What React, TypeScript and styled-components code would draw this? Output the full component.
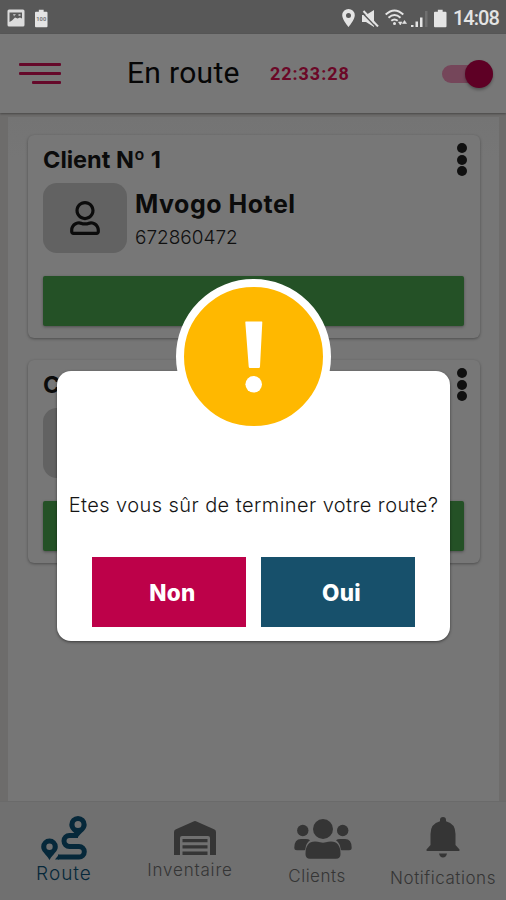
import React from 'react';
import styled, { createGlobalStyle } from 'styled-components';
import { FaRegUser } from 'react-icons/fa';

const GlobalStyle = createGlobalStyle`
  *, *::before, *::after { box-sizing: border-box; }
  body { margin: 0; font-family: Inter, 'Open Sans', sans-serif; }
  button { border: 0; padding: 0; font: inherit; background: none; }
`;

const Screen = styled.div`
  position: relative;
  width: 506px;
  height: 900px;
  overflow: hidden;
  display: flex;
  flex-direction: column;
  background: #6d6c6b;
`;

const StatusBar = styled.div`
  flex: none;
  height: 34px;
  padding: 2px 7px 0;
  display: flex;
  align-items: center;
  justify-content: space-between;
  background: #585858;
  color: #e4e4e4;
`;

const StatusGroup = styled.div<{ $gap: number }>`
  display: flex;
  align-items: center;
  gap: ${(p) => p.$gap}px;
`;

const Clock = styled.span`
  width: 46px;
  white-space: nowrap;
  font: 500 20px/20px Roboto, sans-serif;
  letter-spacing: -1px;
`;

const Header = styled.header`
  flex: none;
  height: 79px;
  padding: 0 13px 0 19px;
  display: flex;
  align-items: center;
  background: #777;
  box-shadow: 0 1px 2px rgba(0, 0, 0, 0.35);
  z-index: 1;
`;

const MenuLines = styled.div`
  width: 42px;
  margin-top: -1px;
  display: flex;
  flex-direction: column;
  align-items: flex-end;
  gap: 6px;
`;

const MenuLine = styled.span<{ $width: number }>`
  width: ${(p) => p.$width}px;
  height: 3px;
  border-radius: 1px;
  background: #65092a;
`;

const Title = styled.h1`
  margin: -2px 0 0 66px;
  width: 143px;
  white-space: nowrap;
  font: 400 30px/36px Roboto, sans-serif;
  letter-spacing: 0.3px;
  color: #060606;
`;

const Timer = styled.span`
  font: 700 18px/22px Roboto, sans-serif;
  letter-spacing: 0.95px;
  color: #6b0827;
`;

const Toggle = styled.div`
  margin-left: auto;
  width: 51px;
  height: 18px;
  display: flex;
  align-items: center;
  justify-content: flex-end;
  background: #75465a;
  border-radius: 9px;
`;

const Knob = styled.span`
  width: 28px;
  height: 28px;
  flex: none;
  border-radius: 50%;
  background: #5e0025;
  box-shadow: 0 2px 3px rgba(0, 0, 0, 0.3);
`;

const Content = styled.main`
  flex: none;
  width: 491px;
  height: 684px;
  margin: 4px 0 0 8px;
  padding: 18px 19px 0 20px;
  display: flex;
  flex-direction: column;
  gap: 22px;
  background: linear-gradient(#747474, #767676 40px);
`;

const Card = styled.section`
  height: 203px;
  padding: 12px 15px 0;
  display: flex;
  flex-direction: column;
  border-radius: 6px;
  background: #777;
  box-shadow: 0 1px 3px rgba(0, 0, 0, 0.35);
`;

const CardHead = styled.div`
  height: 36px;
  display: flex;
  justify-content: space-between;
`;

const CardTitle = styled.h2`
  margin: 0;
  font-size: 23.5px;
  line-height: 26px;
  font-weight: 700;
  letter-spacing: 0;
  color: #0b0b0b;
`;

const Kebab = styled.div`
  margin: -4px -2px 0 0;
  display: flex;
  flex-direction: column;
  gap: 1.5px;
`;

const Dot = styled.span`
  width: 10px;
  height: 10px;
  border-radius: 50%;
  background: #101010;
`;

const Person = styled.div`
  display: flex;
  gap: 8px;
`;

const Avatar = styled.div`
  width: 84px;
  height: 70px;
  display: flex;
  align-items: center;
  justify-content: center;
  border-radius: 14px;
  background: #626262;
  color: #0b0b0b;
`;

const PersonName = styled.div`
  margin-top: 6px;
  font-size: 25px;
  line-height: 30px;
  font-weight: 700;
  letter-spacing: 0.5px;
  color: #0b0b0b;
`;

const Phone = styled.div`
  margin-top: 7px;
  font-size: 19px;
  line-height: 24px;
  font-weight: 300;
  letter-spacing: 0;
  color: #101010;
`;

const GreenBar = styled.div`
  margin-top: 23px;
  margin-right: 1px;
  height: 50px;
  border-radius: 2px;
  background: #245126;
  box-shadow: 0 1px 3px rgba(0, 0, 0, 0.35);
`;

const Nav = styled.nav`
  height: 99px;
  display: flex;
  flex: none;
  background: #707070;
  border-top: 1px solid #6a6a6a;
`;

const NavItem = styled.div<{ $active?: boolean; $top: number; $width: number; $iconIndent?: number }>`
  width: ${(p) => p.$width}px;
  padding-top: ${(p) => p.$top}px;
  display: flex;
  flex: none;
  flex-direction: column;
  align-items: center;
  color: ${(p) => (p.$active ? '#06283a' : '#353535')};

  svg {
    flex: none;
    margin-left: ${(p) => p.$iconIndent ?? 0}px;
  }
`;

const NavLabel = styled.span<{ $size: number; $spacing: number; $gap: number }>`
  margin-top: ${(p) => p.$gap}px;
  font-size: ${(p) => p.$size}px;
  line-height: 22px;
  font-weight: 300;
  letter-spacing: ${(p) => p.$spacing}px;
`;

const Dialog = styled.div`
  position: absolute;
  z-index: 2;
  left: 57px;
  top: 371px;
  width: 393px;
  height: 270px;
  padding-top: 119px;
  border-radius: 14px;
  background: #fff;
  box-shadow: 0 1px 3px rgba(0, 0, 0, 0.5);
`;

const Badge = styled.div`
  position: absolute;
  left: 119px;
  top: -92px;
  width: 155px;
  height: 155px;
  border: 8px solid #fff;
  border-radius: 50%;
  background: #ffb800;
`;

const Message = styled.p`
  margin: 0;
  height: 67px;
  text-align: center;
  white-space: nowrap;
  font-size: 20px;
  line-height: 30px;
  font-weight: 300;
  letter-spacing: 0.43px;
  color: #151515;
`;

const Actions = styled.div`
  display: flex;
  gap: 15px;
  padding-left: 35px;
`;

const Action = styled.button<{ $color: string }>`
  width: 154px;
  height: 70px;
  padding: 0 0 0 7px;
  background: ${(p) => p.$color};
  color: #fff;
  font-size: 22.5px;
  font-weight: 800;
  letter-spacing: 0.3px;
`;

const PictureIcon = () => (
  <svg width="18" height="18" viewBox="0 0 18 18">
    <rect x="0.5" y="0.5" width="17" height="17" rx="1.5" fill="#dcdcdc" />
    <path d="M2.500 3.500H15V9.500l-2-1-2.500 1-2.500-1-3 3-2.500 1.500z" fill="#5a5a5a" />
    <path d="M6 5l1 2.500 2-2.500zM11.500 5h2v2h-2z" fill="#b5b5b5" />
  </svg>
);

const Battery = ({ label }: { label?: string }) => (
  <svg width="12.500" height="19" viewBox="0 0 13 19">
    <path d="M4 0.500h5v2h3q1 0 1 1v14q0 1-1 1H1q-1 0-1-1v-14q0-1 1-1h3z" fill="#e4e4e4" />
    {label && (
      <text x="6.500" y="12.500" textAnchor="middle" fontFamily="Roboto" fontSize="6" fontWeight="700" fill="#777">
        {label}
      </text>
    )}
  </svg>
);

const PinIcon = () => (
  <svg width="13" height="18" viewBox="0 0 13 18">
    <path fillRule="evenodd" d="M6.500 0a6.300 6.300 0 0 0-6.300 6.300C.2 11 6.500 18 6.500 18s6.300-7 6.300-11.700A6.300 6.300 0 0 0 6.500 0zm0 4a2.500 2.500 0 1 1 0 5 2.500 2.500 0 0 1 0-5z" fill="#e4e4e4" />
  </svg>
);

const MuteIcon = () => (
  <svg width="17" height="17" viewBox="0 0 17 17">
    <path d="M0 5h4l8-5v17l-8-5H0z" fill="#e4e4e4" />
    <path d="M0 2.500L14 17" stroke="#585858" strokeWidth="1.500" />
    <path d="M1.500 1L16 16.500" stroke="#e4e4e4" strokeWidth="2" />
  </svg>
);

const WifiIcon = () => (
  <svg width="19" height="18" viewBox="0 0 19 18" overflow="visible" fill="none" stroke="#e4e4e4" strokeWidth="1.900">
    <path d="M0.700 5.500Q9.500-2.700 18.300 5.500M3.500 8.700Q9.500 3.200 15.500 8.700M6.300 11.800Q9.500 9 12.700 11.800" />
    <circle cx="9.500" cy="14.500" r="1.500" fill="#e4e4e4" stroke="none" />
    <path d="M13.500 13h3.500l-1.700 3zM17.500 14.500l2-3 2 3z" fill="#e4e4e4" strokeWidth="0.600" />
  </svg>
);

const SignalIcon = () => (
  <svg width="17" height="17" viewBox="0 0 17 17" fill="#e4e4e4">
    <path d="M0 15h2.500v2H0zM4.500 11.500H7V17H4.500zM9 7.500h2.500V17H9z" />
    <path d="M14 1h2.500v16H14z" fill="#6f6f6f" />
  </svg>
);

const RouteIcon = () => (
  <svg width="46" height="46" viewBox="0 0 46 46">
    <path d="M37 20.500H28.500a5.500 5.500 0 0 0 0 11H38a5.300 5.300 0 0 1 0 10.600H17" fill="none" stroke="currentColor" strokeWidth="5" />
    <path d="M14 44.600l4-5v5z" fill="currentColor" />
    <path fillRule="evenodd" d="M37 1a8.700 8.700 0 0 0-8.700 8.700c0 5 5.700 8 8.700 12.300 3-4.300 8.700-7.300 8.700-12.300A8.700 8.700 0 0 0 37 1zm0 5a3.500 3.500 0 1 1 0 7 3.500 3.500 0 0 1 0-7z" fill="currentColor" />
    <path fillRule="evenodd" d="M8.500 23.500A8.300 8.300 0 0 0 .2 31.800C.2 36.500 5 39 8.500 45c3.500-6 8.300-8.500 8.300-13.200a8.300 8.300 0 0 0-8.300-8.300zm0 5a3.200 3.200 0 1 1 0 6.400 3.200 3.200 0 0 1 0-6.400z" fill="currentColor" />
  </svg>
);

const WarehouseIcon = () => (
  <svg width="42" height="34" viewBox="0 0 42 34" fill="currentColor">
    <path d="M0 34V11Q0 9 2 8.200L19.500.4q1.500-.6 3 0L40 8.200q2 .8 2 2.800v23h-6V17q0-2-2-2H8q-2 0-2 2v17z" />
    <path d="M8.500 18h25v3.300h-25zM8.500 24.300h25v3.300h-25zM8.500 30.600h25V34h-25z" />
  </svg>
);

const PeopleIcon = () => (
  <svg width="58" height="40" viewBox="0 0 58 40" fill="currentColor">
    <circle cx="29" cy="10" r="10" />
    <circle cx="8.800" cy="11.500" r="5.700" />
    <circle cx="48.700" cy="11.500" r="5.700" />
    <path d="M7 20h5q2.500 0 4 1.300-3.800 3-4.300 7-.3 3-1.500 3H3q-2.700 0-2.700-2.500Q.3 20 7 20zM51 20h-5q-2.500 0-4 1.300 3.800 3 4.300 7 .3 3 1.500 3H55q2.700 0 2.700-2.500Q57.700 20 51 20z" />
    <path d="M21 22.500q3 0 5 .8 3 .9 6 0 2-.8 5-.8 9.500 0 9.500 12.500 0 4.800-4.500 4.800H16q-4.500 0-4.500-4.800Q11.500 22.500 21 22.500z" />
  </svg>
);

const BellIcon = () => (
  <svg width="34" height="41" viewBox="0 0 34 41" fill="currentColor">
    <path d="M17 0q3 0 3 3v1.200Q29.500 6.500 29.500 17v11l4 4.500q.5 1.500-1 1.500h-31q-1.500 0-1-1.500l4-4.500V17Q4.500 6.500 14 4.200V3q0-3 3-3zM13 36.500h8q-.8 4-4 4t-4-4z" />
  </svg>
);

const Exclamation = () => (
  <svg width="139" height="139" viewBox="0 0 139 139" fill="#fff">
    <path d="M61.800 34.500h16q.6 0 .5.800L76 79.500q-.1 1.500-1.200 1.500H66q-1.200 0-1.300-1.500L61.300 35.300q0-.8.500-.8z" />
    <circle cx="69.700" cy="97.300" r="8.300" />
  </svg>
);

function ClientCard({ title, name, phone }: { title: string; name: string; phone: string }) {
  return (
    <Card>
      <CardHead>
        <CardTitle>{title}</CardTitle>
        <Kebab><Dot /><Dot /><Dot /></Kebab>
      </CardHead>
      <Person>
        <Avatar><FaRegUser size={34} /></Avatar>
        <div>
          <PersonName>{name}</PersonName>
          <Phone>{phone}</Phone>
        </div>
      </Person>
      <GreenBar />
    </Card>
  );
}

export default function App() {
  return (
    <>
      <GlobalStyle />
      <Screen>
        <StatusBar>
          <StatusGroup $gap={10}>
            <PictureIcon />
            <Battery label="100" />
          </StatusGroup>
          <StatusGroup $gap={6.5}>
            <PinIcon />
            <MuteIcon />
            <WifiIcon />
            <SignalIcon />
            <Battery />
            <Clock>14:08</Clock>
          </StatusGroup>
        </StatusBar>
        <Header>
          <MenuLines>
            <MenuLine $width={42} />
            <MenuLine $width={42} />
            <MenuLine $width={29} />
          </MenuLines>
          <Title>En route</Title>
          <Timer>22:33:28</Timer>
          <Toggle><Knob /></Toggle>
        </Header>
        <Content>
          <ClientCard title="Client Nº 1" name="Mvogo Hotel" phone="672860472" />
          <ClientCard title="Client Nº 2" name="" phone="" />
        </Content>
        <Nav>
          <NavItem $active $top={13} $width={128}>
            <RouteIcon />
            <NavLabel $size={19} $spacing={1} $gap={2}>Route</NavLabel>
          </NavItem>
          <NavItem $top={19} $width={124} $iconIndent={9}>
            <WarehouseIcon />
            <NavLabel $size={17} $spacing={0.8} $gap={4}>Inventaire</NavLabel>
          </NavItem>
          <NavItem $top={17} $width={130} $iconIndent={11}>
            <PeopleIcon />
            <NavLabel $size={17} $spacing={0.5} $gap={6}>Clients</NavLabel>
          </NavItem>
          <NavItem $top={15} $width={122}>
            <BellIcon />
            <NavLabel $size={17} $spacing={0.55} $gap={9}>Notifications</NavLabel>
          </NavItem>
        </Nav>
        <Dialog>
          <Badge><Exclamation /></Badge>
          <Message>Etes vous sûr de terminer votre route?</Message>
          <Actions>
            <Action $color="#bd0149">Non</Action>
            <Action $color="#17506b">Oui</Action>
          </Actions>
        </Dialog>
      </Screen>
    </>
  );
}
